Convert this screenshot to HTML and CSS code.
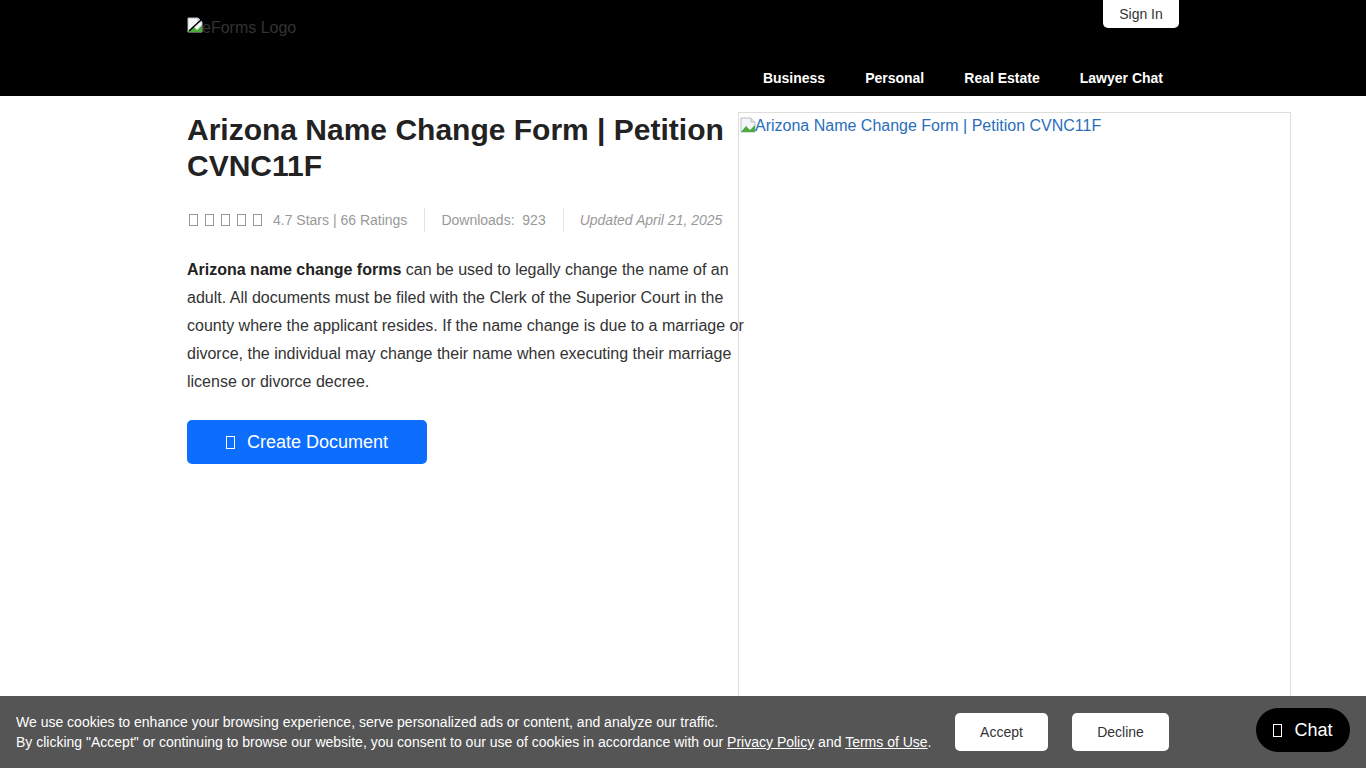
FILE: index.html
```html
<!DOCTYPE html>
<html>
<head>
<meta charset="utf-8">
<link rel="stylesheet" href="styles.css">
</head>
<body>
<header class="topbar">
  <div class="wrap head-inner">
    <div class="logo">
      <svg class="broken" viewBox="0 0 16 16" width="16" height="16"><path d="M1 1h10l4 4v10H1z" fill="#f4f6f8" stroke="#b8c0c8"/><path d="M1 15l5-6 4 4 5-5v7z" fill="#4caa3c"/><path d="M11 1v4h4" fill="#dfe4e8" stroke="#b8c0c8"/><path d="M2 14L14 3" stroke="#000" stroke-width="1.5"/></svg><span class="logo-alt">eForms Logo</span>
    </div>
    <div class="head-right">
      <a class="signin">Sign In</a>
      <nav class="nav">
        <a>Business</a><a>Personal</a><a>Real Estate</a><a>Lawyer Chat</a>
      </nav>
    </div>
  </div>
</header>
<main class="wrap main">
  <section class="left">
    <h1 class="title">Arizona Name Change Form | Petition CVNC11F</h1>
    <div class="meta">
      <span class="stars"><i></i><i></i><i></i><i></i><i></i></span>
      <span class="m-item">4.7 Stars | 66 Ratings</span>
      <span class="sep"></span>
      <span class="m-item">Downloads:&nbsp; 923</span>
      <span class="sep"></span>
      <span class="m-item upd">Updated April 21, 2025</span>
    </div>
    <p class="desc"><b>Arizona name change forms</b> can be used to legally change the name of an adult. All documents must be filed with the Clerk of the Superior Court in the county where the applicant resides. If the name change is due to a marriage or divorce, the individual may change their name when executing their marriage license or divorce decree.</p>
    <a class="create"><i class="ibox"></i>Create Document</a>
  </section>
  <section class="preview">
    <div class="img-alt"><svg class="broken" viewBox="0 0 16 16" width="16" height="16"><path d="M1 1h10l4 4v10H1z" fill="#f4f6f8" stroke="#b8c0c8"/><path d="M1 15l5-6 4 4 5-5v7z" fill="#4caa3c"/><path d="M11 1v4h4" fill="#dfe4e8" stroke="#b8c0c8"/></svg><span>Arizona Name Change Form | Petition CVNC11F</span></div>
  </section>
</main>
<div class="cookie">
  <div class="cookie-text">
    <div>We use cookies to enhance your browsing experience, serve personalized ads or content, and analyze our traffic.</div>
    <div>By clicking "Accept" or continuing to browse our website, you consent to our use of cookies in accordance with our <u>Privacy Policy</u> and <u>Terms of Use</u>.</div>
  </div>
  <div class="cookie-btns">
    <a class="cbtn accept">Accept</a>
    <a class="cbtn decline">Decline</a>
  </div>
  <a class="chat"><i class="ibox"></i>Chat</a>
</div>
</body>
</html>
```
FILE: styles.css
```css
* { box-sizing: border-box; }
html, body { margin: 0; padding: 0; }
body { font-family: "Liberation Sans", Arial, sans-serif; color: #222; background: #fff; overflow: hidden; height: 768px; }
a { cursor: pointer; }
.wrap { width: 992px; margin-left: 187px; }
.topbar { background: #000; height: 96px; }
.head-inner { display: flex; justify-content: space-between; height: 96px; }
.logo { padding-top: 17px; display: flex; align-items: flex-start; }
.logo-alt { color: #333; font-size: 16px; line-height: 20px; margin-top: 1px; margin-left: -1px; }
.head-right { display: flex; flex-direction: column; align-items: flex-end; }
.signin { background: #fff; color: #333; font-size: 14px; height: 28px; width: 76px; display: flex; align-items: center; justify-content: center; border-radius: 0 0 5px 5px; }
.nav { display: flex; margin-top: 42px; margin-right: -4px; }
.nav a { color: #fff; font-weight: bold; font-size: 14px; padding: 0 20px; line-height: 16px; }
.main { display: flex; width: 1103px; padding-top: 16px; }
.left { width: 551px; flex: none; }
.title { font-size: 30px; font-weight: bold; line-height: 36px; margin: 0; color: #222; }
.meta { display: flex; align-items: center; margin-top: 24px; height: 24px; font-size: 14px; color: #999; }
.stars { display: flex; gap: 7px; margin-left: 2px; margin-right: 11px; }
.stars i { display: block; width: 9px; height: 12px; border: 1px solid #999; }
.m-item { white-space: nowrap; }
.upd { font-style: italic; }
.sep { width: 1px; height: 24px; background: #e2e2e2; margin: 0 16px 0 17px; }
.desc { width: 562px; font-size: 16px; line-height: 28px; color: #333; margin: 24px 0 0; }
.desc b { color: #222; }
.create { margin-top: 24px; display: flex; align-items: center; justify-content: center; width: 240px; height: 44px; border-radius: 5px; background: #0d6efd; color: #fff; font-size: 18px; }
.create .ibox { width: 9px; height: 13px; border: 1px solid #fff; display: inline-block; margin-right: 12px; }
.preview { width: 553px; height: 700px; border: 1px solid #ddd; flex: none; }
.img-alt { display: flex; align-items: flex-start; color: #2a6ebb; font-size: 16px; line-height: 18px; padding: 4px 0 0 1px; }
.img-alt span { margin-left: -1px; }
.cookie { position: fixed; left: 0; right: 0; bottom: 0; height: 72px; background: #555; display: flex; align-items: center; padding-left: 16px; color: #fff; }
.cookie-text { font-size: 14px; line-height: 20px; width: 939px; }
.cookie-btns { display: flex; gap: 24px; }
.cbtn { background: #fff; color: #333; font-size: 14px; height: 38px; border-radius: 5px; display: flex; align-items: center; justify-content: center; }
.accept { width: 93px; }
.decline { width: 97px; }
.chat { margin-left: 87px; margin-top: -4px; background: #000; color: #fff; font-size: 18px; height: 44px; width: 94px; border-radius: 22px; display: flex; align-items: center; justify-content: center; }
.chat .ibox { width: 9px; height: 13px; border: 1px solid #fff; display: inline-block; margin-right: 12px; }
```
